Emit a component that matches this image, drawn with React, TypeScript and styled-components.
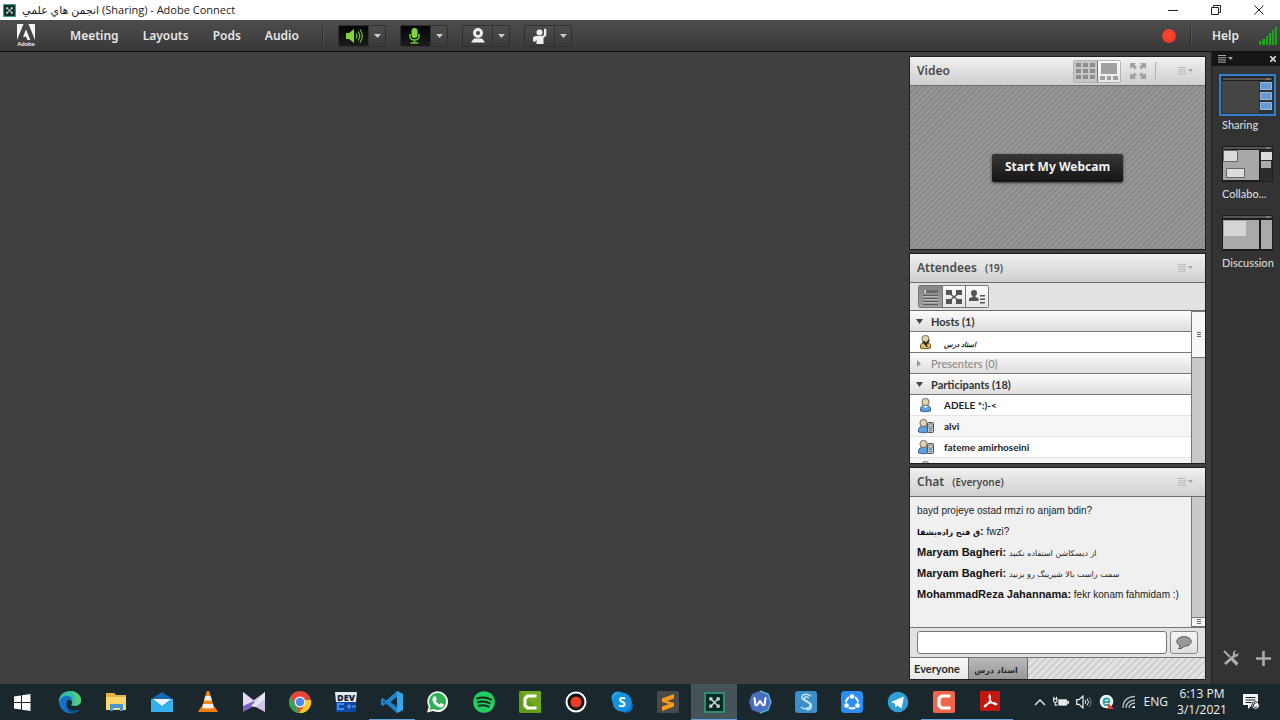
import React, { useState } from "react";
import styled, { createGlobalStyle, css } from "styled-components";

const GlobalStyle = createGlobalStyle`
  *, *::before, *::after { box-sizing: border-box; }
  html, body, #root { height: 100%; }
  body {
    margin: 0;
    background: #404040;
    font-family: "Noto Sans", "DejaVu Sans", sans-serif;
    font-size: 12px;
    overflow: hidden;
  }
  button, input { font: inherit; margin: 0; }
  button { border: 0; padding: 0; background: none; color: inherit; cursor: pointer; }
  ul { list-style: none; margin: 0; padding: 0; }
  h2, p { margin: 0; }
  svg { display: block; flex: none; }
`;

const narrowSans = `Lato, "DejaVu Sans", sans-serif`;

/* ---------- window frame ---------- */

const Window = styled.div`
  display: flex;
  flex-direction: column;
  height: 100vh;
`;

const TitleBar = styled.header`
  display: flex;
  align-items: center;
  flex: none;
  height: 20px;
  padding-left: 3px;
  gap: 6px;
  background: #fff;
  color: #222;
  font-family: "Open Sans", "DejaVu Sans", sans-serif;
  font-size: 11px;
  line-height: 20px;
`;

const WindowControls = styled.div`
  display: flex;
  margin-left: auto;
`;

const WindowButton = styled.button`
  display: flex;
  justify-content: center;
  align-items: center;
  width: 43px;
  height: 18px;
`;

const MenuBar = styled.nav`
  display: flex;
  align-items: center;
  flex: none;
  height: 32px;
  padding-left: 17px;
  background: linear-gradient(#4d4d4d, #383838);
  border-bottom: 1px solid #111;
  color: #e6e6e6;
`;

const MenuItems = styled.div`
  display: flex;
  gap: 24px;
  margin-left: 35px;
  width: 252px;
`;

const MenuButton = styled.button`
  font-size: 12px;
  font-weight: 600;
  line-height: 20px;
`;

const Divider = styled.span<{ $light?: boolean }>`
  width: 2px;
  height: 18px;
  background: ${(p) => (p.$light ? "#b4b4b4" : "#2c2c2c")};
  border-right: 1px solid ${(p) => (p.$light ? "#dcdcdc" : "#555")};
`;

const DeviceTools = styled.div`
  display: flex;
  gap: 14px;
  margin-left: 14px;
`;

const DeviceGroup = styled.div`
  display: flex;
  height: 22px;
  border: 1px solid #2e2e2e;
  border-radius: 2px;
  background: linear-gradient(#4c4c4c, #3b3b3b);
`;

const DeviceButton = styled.button<{ $on?: boolean }>`
  display: flex;
  align-items: center;
  justify-content: center;
  width: 30px;
  background: ${(p) => (p.$on ? "linear-gradient(#050505, #1c1c1c)" : "none")};
  border-right: 1px solid #303030;
`;

const CaretButton = styled.button`
  display: flex;
  align-items: center;
  justify-content: center;
  width: 16px;
`;

const MenuRight = styled.div`
  display: flex;
  align-items: center;
  margin-left: auto;
  padding-right: 2px;
`;

const RecordLight = styled.span`
  width: 14px;
  height: 14px;
  margin-right: 14px;
  border-radius: 50%;
  background: radial-gradient(circle at 45% 40%, #ff4a32, #e8301c);
`;

const HelpButton = styled(MenuButton)`
  margin: 0 20px;
`;

/* ---------- main area ---------- */

const Main = styled.main`
  display: flex;
  flex: 1;
  min-height: 0;
`;

const Stage = styled.section`
  flex: 1;
  min-width: 0;
  background: #404040;
`;

const PodColumn = styled.div`
  display: flex;
  flex-direction: column;
  gap: 3px;
  flex: none;
  width: 302px;
  padding: 4px 5px 4px 0;
`;

const Pod = styled.section<{ $share: number }>`
  display: flex;
  flex-direction: column;
  flex: ${(p) => p.$share} 1 0;
  min-height: 0;
  overflow: hidden;
  border: 1px solid #1e1e1e;
  background: #e2e2e2;
`;

const PodHeader = styled.header`
  display: flex;
  align-items: center;
  flex: none;
  height: 29px;
  padding: 0 12px 0 7px;
  background: linear-gradient(#f0f0f0, #cfcfcf);
  border-bottom: 1px solid #6e6e6e;
  color: #4a4a4a;
`;

const PodTitle = styled.h2`
  font-size: 12px;
  font-weight: 600;
  line-height: 20px;
`;

const PodNote = styled.span`
  margin-left: 8px;
  font-size: 10px;
  font-weight: 600;
`;

const PodTools = styled.div`
  display: flex;
  align-items: center;
  margin-left: auto;
`;

const Segmented = styled.div<{ $dark?: boolean }>`
  display: flex;
  height: 23px;
  border: 1px solid ${(p) => (p.$dark ? "#777" : "#b4b4b4")};
  border-radius: 2px;
  overflow: hidden;
`;

const Segment = styled.button<{ $active?: boolean; $dark?: boolean }>`
  display: flex;
  align-items: center;
  justify-content: center;
  width: 23px;
  background: ${(p) =>
    p.$active ? (p.$dark ? "linear-gradient(#868686, #a0a0a0)" : "#c6c6c6") : "linear-gradient(#fbfbfb, #e6e6e6)"};
  & + & { border-left: 1px solid ${(p) => (p.$dark ? "#777" : "#ccc")}; }
`;

const IconButton = styled.button`
  display: flex;
  align-items: center;
  justify-content: center;
`;

const FullScreenButton = styled(IconButton)`
  margin: 0 9px;
`;

const PodMenuButton = styled(IconButton)`
  margin-left: 21px;
`;

const VideoBody = styled.div`
  display: flex;
  align-items: center;
  justify-content: center;
  flex: 1;
  background: repeating-linear-gradient(135deg, #8a8a8a 0 2px, #969696 2px 4px);
`;

const WebcamButton = styled.button`
  height: 28px;
  padding: 0 13px 2px;
  border-radius: 2px;
  background: linear-gradient(#363636, #141414);
  box-shadow: 0 1px 3px #333;
  color: #f2f2f2;
  font-size: 12px;
  font-weight: 700;
`;

const AttendeeToolbar = styled.div`
  display: flex;
  align-items: center;
  flex: none;
  height: 28px;
  padding-left: 8px;
  background: #e2e2e2;
  border-bottom: 1px solid #6e6e6e;
`;

const ScrollArea = styled.div`
  display: flex;
  flex: 1;
  min-height: 0;
`;

const Scrollable = styled.div`
  flex: 1;
  min-width: 0;
  overflow: hidden;
`;

const ScrollTrack = styled.div<{ $end?: boolean }>`
  display: flex;
  flex-direction: column;
  justify-content: ${(p) => (p.$end ? "flex-end" : "flex-start")};
  flex: none;
  width: 14px;
  background: #c8c8c8;
  border-left: 1px solid #777;
`;

const ScrollThumb = styled.div<{ $long?: boolean }>`
  display: flex;
  align-items: center;
  justify-content: center;
  height: ${(p) => (p.$long ? 47 : 10)}px;
  background: #f7f7f7;
  border: solid #777;
  border-width: 1px 0;
`;

const GroupButton = styled.button<{ $empty?: boolean }>`
  display: flex;
  align-items: center;
  gap: 8px;
  width: 100%;
  height: 21px;
  padding: 0 6px;
  background: linear-gradient(#fcfcfc, #dedede);
  border-bottom: 1px solid #777;
  color: ${(p) => (p.$empty ? "#8a8a8a" : "#333")};
  font-family: ${narrowSans};
  font-size: 11px;
  font-weight: ${(p) => (p.$empty ? 500 : 700)};
`;

const AttendeeRow = styled.li`
  display: flex;
  align-items: center;
  gap: 7px;
  height: 21px;
  padding-left: 7px;
  background: #fff;
  border-bottom: 1px solid #e3e3e3;
  color: #222;
  font-family: ${narrowSans};
  font-size: 10px;
  font-weight: 700;
  &:nth-child(even) { background: #f6f6f6; }
`;

const HostList = styled.ul`
  ${AttendeeRow} { border-color: #777; }
`;

const HostName = styled.span`
  padding-top: 4px;
  font-size: 7px;
  font-style: italic;
`;

const Messages = styled.ul`
  padding: 3px 7px;
  color: #222;
  font-family: "Liberation Sans", "DejaVu Sans", sans-serif;
  font-size: 10px;
`;

const ChatBody = styled(ScrollArea)`
  background: #f0f0f0;
  border-bottom: 1px solid #777;
`;

const Message = styled.li`
  height: 21px;
  line-height: 21px;
  white-space: nowrap;
`;

const Persian = styled.span`
  font-family: "DejaVu Sans", sans-serif;
  font-size: 8px;
`;

const Sender = styled.b`
  color: #111;
  font-size: 11px;
`;

const Composer = styled.form`
  display: flex;
  align-items: center;
  gap: 3px;
  flex: none;
  height: 29px;
  padding: 0 7px;
`;

const ChatInput = styled.input`
  flex: 1;
  min-width: 0;
  height: 23px;
  padding: 0 4px;
  border: 1px solid #777;
  border-radius: 3px;
  background: #fff;
`;

const SendButton = styled.button`
  display: flex;
  align-items: center;
  justify-content: center;
  width: 28px;
  height: 23px;
  border: 1px solid #8a8a8a;
  border-radius: 3px;
  background: linear-gradient(#f6f6f6, #dedede);
`;

const ChatTabs = styled.div`
  display: flex;
  flex: none;
  height: 22px;
  border-top: 1px solid #777;
  background: repeating-linear-gradient(135deg, #cfcfcf 0 2px, #e2e2e2 2px 5px);
`;

const ChatTab = styled.button<{ $active?: boolean }>`
  width: 59px;
  padding-right: 4px;
  border-right: 1px solid #666;
  color: #2a2a2a;
  font-family: ${narrowSans};
  font-size: 11px;
  font-weight: 700;
  background: ${(p) => (p.$active ? "linear-gradient(#fafafa, #e6e6e6)" : "linear-gradient(#b8b8b8, #989898)")};
`;

/* ---------- layouts sidebar ---------- */

const Sidebar = styled.aside`
  display: flex;
  flex-direction: column;
  flex: none;
  width: 69px;
  background: #333;
  border-left: 1px solid #1f1f1f;
  color: #d8d8d8;
`;

const SidebarHeader = styled.div`
  display: flex;
  align-items: center;
  justify-content: space-between;
  height: 14px;
  padding: 0 4px 0 6px;
  background: #161616;
`;

const LayoutList = styled.ul`
  display: flex;
  flex-direction: column;
  gap: 10px;
  padding: 8px 4px 0 7px;
`;

const LayoutButton = styled.button`
  display: flex;
  flex-direction: column;
  gap: 1px;
  font-family: ${narrowSans};
  font-size: 11px;
  font-weight: 500;
  line-height: 16px;
  text-align: left;
`;

const Preview = styled.span<{ $selected?: boolean }>`
  display: block;
  padding: 1px;
  border: 2px solid ${(p) => (p.$selected ? "#2f7fd0" : "transparent")};
`;

const LayoutLabel = styled.span`
  padding-left: 3px;
  white-space: nowrap;
`;

const SidebarTools = styled.div`
  display: flex;
  justify-content: space-between;
  margin-top: auto;
  padding: 0 9px 18px 11px;
`;

/* ---------- taskbar ---------- */

const Taskbar = styled.footer`
  display: flex;
  flex: none;
  height: 36px;
  background: #1a282d;
  color: #f0f0f0;
`;

const TaskButton = styled.button<{ $state?: "running" | "focused" }>`
  display: flex;
  align-items: center;
  justify-content: center;
  width: 46px;
  flex: 0 1 46px;
  ${(p) => p.$state === "focused" && css`background: #46545a;`}
  ${(p) => p.$state && css`box-shadow: inset 0 -1px #5fa3dc;`}
`;

const StartButton = styled(TaskButton)`
  flex-basis: 47px;
  padding-right: 3px;
`;

const Tray = styled.div`
  display: flex;
  align-items: center;
  gap: 7px;
  margin-left: auto;
  padding-right: 20px;
  font-family: "Open Sans", sans-serif;
  font-size: 12px;
  line-height: 16px;
`;

const Clock = styled.time`
  width: 50px;
  margin: 0 9px 0 2px;
  text-align: center;
  white-space: nowrap;
`;

/* ---------- icons ---------- */

const ConnectIcon = ({ size }: { size: number }) => (
  <svg width={size} height={size} viewBox="0 0 20 20">
    <rect x="1" y="1" width="18" height="18" fill="#082b25" stroke="#2f9c7b" strokeWidth="1.6" />
    <g fill="#c8d8d2">
      <path d="M5 5h3v3H5zM12 5h3v3h-3zM5 12h3v3H5zM12 12h3v3h-3z" />
      <path d="M6 7l1-1 7 7-1 1zM13 6l1 1-7 7-1-1z" />
    </g>
  </svg>
);

const AdobeLogo = () => (
  <svg width="18" height="24" viewBox="0 0 18 24">
    <path fill="#f4f4f4" d="M0 0h6.5L0 16zM11.500 0H18v16zM9 5.500l4.400 10.500h-3l-1.300-3.300H6z" />
    <text x="9" y="22" textAnchor="middle" fill="#f4f4f4" fontSize="6" fontWeight="700" fontFamily="Lato">Adobe</text>
  </svg>
);

const Caret = ({ color = "#ccc" }: { color?: string }) => (
  <svg width="7" height="4" viewBox="0 0 7 4"><path d="M0 0h7L3.500 4z" fill={color} /></svg>
);

const SpeakerIcon = () => (
  <svg width="18" height="16" viewBox="0 0 18 16">
    <path d="M1 5h3l5-4v14l-5-4H1z" fill="#7fd53a" />
    <path d="M11 5.500q2 2.500 0 5M13 3.500q3.500 4.500 0 9M15 1.500q4.500 6.500 0 13" fill="none" stroke="#6cc030" strokeWidth="1.200" />
  </svg>
);

const MicIcon = () => (
  <svg width="14" height="16" viewBox="0 0 14 16">
    <rect x="2.500" y="0" width="6" height="10" rx="3" fill="#7fd53a" />
    <path d="M1 6v2q0 4 4.500 4T10 8V6M5.500 12v3M1.500 15h8" fill="none" stroke="#6cc030" strokeWidth="1.600" />
  </svg>
);

const WebcamIcon = () => (
  <svg width="14" height="15" viewBox="0 0 14 15">
    <circle cx="7" cy="5" r="3.500" fill="none" stroke="#efefef" strokeWidth="3" />
    <path d="M3 10.500h8l3 4H0z" fill="#efefef" />
  </svg>
);

const RaiseHandIcon = () => (
  <svg width="15" height="16" viewBox="0 0 15 16">
    <circle cx="7.500" cy="4.500" r="3" fill="#efefef" />
    <path d="M1 9.500Q2 8 4 8h6.500l1.500-1.500V2q0-1.500 1.200-1.500T14.300 2v5.500L11.500 10v6h-7v-4.500L3 14 1 13z" fill="#efefef" />
  </svg>
);

const SignalIcon = () => (
  <svg width="19" height="18" viewBox="0 0 19 18">
    <path d="M0 14h2v4H0zM3 12h3v6H3zM7 9h2v9H7zM10 6h2v12h-2zM13 3h2v15h-2zM16 0h2v18h-2z" fill="#18a818" />
  </svg>
);

const PodMenuIcon = ({ color = "#aaa", lineColor = color }: { color?: string; lineColor?: string }) => (
  <svg width="15" height="8" viewBox="0 0 15 8">
    <path d="M0 .5h8M0 2.700h8M0 4.900h8M0 7.100h8" stroke={lineColor} />
    <path d="M10 2h5l-2.500 3z" fill={color} />
  </svg>
);

const GridIcon = () => (
  <svg width="19" height="16" viewBox="0 0 19 16">
    <path d="M0 0h5v4H0zM7 0h5v4H7zM14 0h5v4h-5zM0 6h5v4H0zM7 6h5v4H7zM14 6h5v4h-5zM0 12h5v4H0zM7 12h5v4H7zM14 12h5v4h-5z" fill="#8d8d8d" />
  </svg>
);

const FilmstripIcon = () => (
  <svg width="18" height="17" viewBox="0 0 18 17">
    <path d="M1 0h16v11H1zM0 13h5v4H0zM7 13h4v4H7zM13 13h5v4h-5z" fill="#a0a0a0" />
  </svg>
);

const FullScreenIcon = () => (
  <svg width="16" height="16" viewBox="0 0 16 16">
    <path d="M0 0h6L4.300 1.700l2.500 2.500-2.300 2.300L2 4 0 6zM16 0v6l-2-2-2.500 2.500-2.300-2.300 2.500-2.500L10 0zM0 16v-6l2 2 2.500-2.500 2.300 2.300-2.500 2.500L6 16zM16 16h-6l1.700-1.700-2.500-2.500 2.300-2.300L14 12l2-2z" fill="#a0a0a0" />
  </svg>
);

const ListIcon = () => (
  <svg width="17" height="16" viewBox="0 0 17 16">
    <path d="M1 1h15v3H1z" fill="#6a6a6a" />
    <path d="M2 1h2v3H2z" fill="#ccc" />
    <path d="M1 6.500h15M1 9.500h15M1 12.500h15M1 15.500h15" stroke="#5b5b5b" />
    <path d="M1 7.500h15M1 10.500h15M1 13.500h15" stroke="#bbb" />
  </svg>
);

const BreakoutIcon = () => (
  <svg width="16" height="14" viewBox="0 0 16 14">
    <path d="M0 0h6v5H0zM10 0h6v5h-6zM0 9h6v5H0zM10 9h6v5h-6z" fill="#555" />
    <path d="M3 3l10 8M13 3L3 11" stroke="#555" strokeWidth="1.600" />
  </svg>
);

const StatusIcon = () => (
  <svg width="16" height="14" viewBox="0 0 16 14">
    <circle cx="5" cy="3" r="3" fill="#555" />
    <path d="M3.500 5h3v2l3 1.200V11H0V8.200L3.500 7zM11 5h5v1.500h-5zM11 8.500h5V10h-5zM11 12h5v1.500h-5z" fill="#555" />
  </svg>
);

const GroupArrow = ({ open }: { open: boolean }) => (
  <svg width="7" height="7" viewBox="0 0 7 7">
    <path d={open ? "M0 1h7L3.500 6z" : "M1 0v7l4-3.500z"} fill={open ? "#444" : "#999"} />
  </svg>
);

const PersonIcon = ({ kind }: { kind: "host" | "user" | "mobile" }) => {
  const body = kind === "host" ? "#e2bb63" : "#5f9fde";
  const edge = kind === "host" ? "#66501c" : "#38638f";
  const x = kind === "mobile" ? 0 : 2;
  return (
    <svg width="20" height="16" viewBox="-1 0 20 16">
      <g transform={`translate(${x} 0)`}>
        <path d="M.5 14q-.5-5 3-5.500h4q3.500.5 3 5.500-5.500 1.500-10 0z" fill={body} stroke={edge} />
        <circle cx="5.500" cy="5" r="3.600" fill="#dfd3b5" stroke="#776d58" />
        {kind === "host" && <path d="M3 8l3 3 3-5M4 7l3 6" stroke="#332a16" strokeWidth="1.600" fill="none" />}
        {kind === "user" && <path d="M3 9l2.500 2L8 9z" fill="#fff" />}
      </g>
      {kind === "mobile" && (
        <g>
          <rect x="9.500" y="4.500" width="6" height="10" rx="1" fill="#b9c0c6" stroke="#555" />
          <path d="M11 6h3v3h-3zM11 10.500h3M11 12.500h3" stroke="#6c7379" fill="#e8ecee" strokeWidth=".8" />
        </g>
      )}
    </svg>
  );
};

const Grip = () => (
  <svg width="4" height="6" viewBox="0 0 4 6"><path d="M0 .5h4M0 2.500h4M0 4.500h4" stroke="#666" /></svg>
);

const BubbleIcon = () => (
  <svg width="16" height="14" viewBox="0 0 16 14">
    <path d="M8 .7c4 0 7.200 2 7.200 4.800S12 10.300 8 10.300q-2 2.700-5.500 2.500Q4 11.500 4 9.500C2 8.600.8 7.200.8 5.500.8 2.700 4 .7 8 .7z" fill="#999" stroke="#555" />
  </svg>
);

const LayoutDrawing = ({ kind }: { kind: "sharing" | "collaboration" | "discussion" }) => (
  <svg width="51" height="36" viewBox="0 0 51 36">
    <rect width="51" height="36" fill="#1c1c1c" />
    <path d="M1 2h49" stroke="#555" strokeWidth="2" />
    <path d="M44 2h4" stroke="#b5a27a" />
    {kind === "sharing" && (
      <>
        <rect x="0" y="4" width="38" height="32" fill="#454545" />
        <rect x="37" y="4" width="14" height="32" fill="#303030" />
        <path d="M38.500 5.500h11v7h-11zM38.500 15.500h11v7h-11zM38.500 25.500h11v7h-11z" fill="#6699d0" stroke="#93bce8" />
      </>
    )}
    {kind === "collaboration" && (
      <>
        <rect x="1" y="4" width="36" height="30" fill="#a8a8a8" />
        <rect x="38" y="4" width="12" height="31" fill="#2c2c2c" />
        <path d="M1.500 4.500h14v11h-14zM4.500 22.500h18v9h-18z" fill="#dcdcdc" stroke="#666" />
        <path d="M39 6h11v8H39z" fill="#dcdcdc" />
        <path d="M39 15h10v7H39z" fill="#aaa" />
      </>
    )}
    {kind === "discussion" && (
      <>
        <rect x="1" y="5" width="36" height="29" fill="#aaa" />
        <rect x="2" y="6" width="22" height="15" fill="#d5d5d5" />
        <rect x="39" y="5" width="11" height="29" fill="#aaa" />
      </>
    )}
  </svg>
);

const TaskIcon = ({ children }: { children: React.ReactNode }) => (
  <svg width="24" height="24" viewBox="0 0 24 24">{children}</svg>
);

const apps: { name: string; state?: "running" | "focused"; art: React.ReactNode }[] = [
  {
    name: "Edge",
    art: (
      <>
        <path d="M1 13C0 6 5 1 12 1s12 5 11 11c-1 4-7 5-10 3 2-2 1-6-3-6s-6 3-9 4z" fill="#35bfa9" />
        <path d="M1 13C2 4 13 4 15 10c-4-3-9 2-5 8 3 4 8 4 12 1-3 4-8 5-12 4C5 22 2 18 1 13z" fill="#1473c4" />
        <path d="M9 11c-3 7 4 12 12 8-6 8-16 2-12-8z" fill="#0c4f99" />
        <path d="M13 1c7 0 11 6 10 11-1 3-5 4-8 3 4-3 3-9-2-14z" fill="#62cf6a" opacity=".75" />
      </>
    ),
  },
  {
    name: "File Explorer",
    art: (
      <>
        <path d="M2 3h8l2 2h10v15H2z" fill="#e8b33c" />
        <path d="M2 7h20v13H2z" fill="#fbd76b" />
        <path d="M6 21v-7h13v7h-3v-3H9v3z" fill="#4796cf" />
      </>
    ),
  },
  {
    name: "Mail",
    art: (
      <>
        <path d="M1 9l11-7 11 7v4H1z" fill="#1467b0" />
        <path d="M1 9h22v13H1z" fill="#2aa5e8" />
        <path d="M1 9l11 8 11-8v13H1z" fill="#37b0ee" opacity=".85" />
        <path d="M3 9h18l-9 7z" fill="#eef6fb" />
      </>
    ),
  },
  {
    name: "VLC",
    art: (
      <>
        <path d="M5 17h14l3 5H2z" fill="#ef7d12" />
        <path d="M10.800 1h2.400l5 17q-6 3-12.400 0z" fill="#f58a1c" />
        <path d="M9.300 6h5.400l1.200 4.500H8.100zM7 14h10l1 3.500q-6 2-12 0z" fill="#efefef" />
      </>
    ),
  },
  {
    name: "KMPlayer",
    art: (
      <>
        <path d="M1 2l11 8v6L1 22z" fill="#7a63c4" />
        <path d="M23 2L12 10v6l11 6z" fill="#cfc5e8" />
        <path d="M1 2l11 9L1 16z" fill="#e4dcf6" />
        <path d="M23 2L9 16l4 1 10-8z" fill="#e9e4f4" />
      </>
    ),
  },
  {
    name: "Chrome",
    art: (
      <>
        <circle cx="12" cy="12" r="11" fill="#e5473a" />
        <path d="M2.500 6.500L9 17l2 6A11 11 0 0 1 2.500 6.500z" fill="#31a24f" />
        <path d="M23 10H13l3 6-5 7A11 11 0 0 0 22.500 8z" fill="#fbc828" />
        <circle cx="12" cy="12" r="5.500" fill="#f2f2f2" />
        <circle cx="12" cy="12" r="4.200" fill="#4a8af0" />
      </>
    ),
  },
  {
    name: "Dev-C++",
    art: (
      <>
        <path d="M2 2h20v20H2z" fill="#1247a0" />
        <path d="M1 2h22l-1 10H2z" fill="#e5e9f2" />
        <text x="12" y="11" textAnchor="middle" fontSize="9" fontWeight="800" fontFamily="Open Sans" fill="#16223f">DEV</text>
        <path d="M10 14H4v5h6M13 16.500h4M15 14.500v4M18 16.500h4" stroke="#3f8cf0" strokeWidth="2" fill="none" />
      </>
    ),
  },
  {
    name: "Visual Studio Code",
    state: "running",
    art: (
      <>
        <path d="M17 1l6 3v16l-6 3L6 13.500 3 16l-2-1.200V9.200L3 8l3 2.500z" fill="#1c83cd" />
        <path d="M17 7v10l-6.500-5z" fill="#1a282d" />
        <path d="M3.500 10.500v3L5 12z" fill="#1a282d" />
        <path d="M17 1l6 3v16l-6 3z" fill="#37a5ec" />
      </>
    ),
  },
  {
    name: "WhatsApp",
    art: (
      <>
        <path d="M1 22.500l1.600-5.700A10.400 10.400 0 1 1 7 21z" fill="#f3f3f3" />
        <path d="M3.500 20l1-3.700A8.500 8.500 0 1 1 7.500 19z" fill="#2fb255" />
        <path d="M8 6.500l1.500-.3 1.300 3-1.200 1.500q1.400 2.600 3.900 3.700l1.400-1.500 2.900 1.500c-.2 3-3 3.300-5.300 2.300-3.300-1.300-6-4.700-6-7.300 0-1.300.6-2.200 1.500-2.900z" fill="#fff" />
      </>
    ),
  },
  {
    name: "Spotify",
    art: (
      <>
        <circle cx="12" cy="12" r="10.800" fill="#1fcf60" />
        <path d="M5 8.500q8-2.500 14 1.200M6 12.300q6.500-2 11.700 1M6.800 15.800q5.500-1.500 9.700.9" stroke="#14281c" strokeWidth="2" fill="none" strokeLinecap="round" />
      </>
    ),
  },
  {
    name: "Camtasia",
    art: (
      <>
        <rect x="1" y="1" width="22" height="22" rx="1.500" fill="#5f9c10" />
        <path d="M1 1h22v22z" fill="#7fb62a" opacity=".6" />
        <path d="M18.500 6H9.500L7 8.500v7L9.500 18h9" fill="none" stroke="#fff" strokeWidth="3.200" />
      </>
    ),
  },
  {
    name: "Recorder",
    art: (
      <>
        <circle cx="12" cy="12" r="9.500" fill="#141414" stroke="#fff" strokeWidth="2" />
        <circle cx="12" cy="12" r="5.500" fill="#ee3a20" />
      </>
    ),
  },
  {
    name: "Skype",
    art: (
      <>
        <circle cx="8" cy="8" r="6.500" fill="#20a9ec" />
        <circle cx="16" cy="16" r="6.800" fill="#0b78cf" />
        <circle cx="12" cy="12" r="9.600" fill="#1292df" />
        <text x="12" y="17" textAnchor="middle" fontSize="14" fontWeight="700" fontFamily="Open Sans" fill="#fff">S</text>
      </>
    ),
  },
  {
    name: "Sublime Text",
    art: (
      <>
        <rect x="1" y="1" width="22" height="22" rx="1.500" fill="#4a4a4a" />
        <path d="M6 8.500l12-4.500v4.500L11 11l7 2v3.500L6 21v-4.500l7-2.500-7-2z" fill="#ff9a12" />
      </>
    ),
  },
  { name: "Adobe Connect", state: "focused", art: null },
  {
    name: "Word helper",
    art: (
      <>
        <path d="M12 1l8 3 3 8-3 8-8 3-8-3-3-8 3-8z" fill="#4a6fc0" />
        <path d="M12 1l8 3 3 8-3 8-8 3" fill="none" stroke="#5cb2e0" strokeWidth="1.400" />
        <path d="M6.500 8l.8 6q.4 2 2 1l2.700-4 2.700 4q1.600 1 2-1l.8-6" fill="none" stroke="#fff" strokeWidth="2" strokeLinecap="round" strokeLinejoin="round" />
      </>
    ),
  },
  {
    name: "Sketch tool",
    art: (
      <>
        <rect x="1" y="1" width="22" height="22" rx="3" fill="#3b8fc9" />
        <path d="M17 6q-4-3-8-1-3 3 1 5l5 3q3 3-1 5-4 2-7-1M15 8q-3-2-5 0 0 2 3 3l4 3q2 5-4 6" fill="none" stroke="#bfe3f3" strokeWidth="1.500" />
      </>
    ),
  },
  {
    name: "SHAREit",
    art: (
      <>
        <rect x="1" y="1" width="22" height="22" rx="4" fill="#2c8df5" />
        <circle cx="12" cy="12.500" r="6" fill="none" stroke="#fff" strokeWidth="1.800" />
        <g fill="#fff" stroke="#2c8df5">
          <circle cx="12" cy="6.500" r="2.800" />
          <circle cx="6.500" cy="15.500" r="2.800" />
          <circle cx="17.500" cy="15.500" r="2.800" />
        </g>
      </>
    ),
  },
  {
    name: "Telegram",
    art: (
      <>
        <circle cx="12" cy="12" r="10.300" fill="#2f9fd8" />
        <path d="M5 12l13-5.500-2.500 12-4-3-2 2-.7-4z" fill="#fff" />
      </>
    ),
  },
  {
    name: "Camtasia Recorder",
    state: "running",
    art: (
      <>
        <rect x="1" y="1" width="22" height="22" rx="2" fill="#f0654b" />
        <path d="M18.500 6H9.500L7 8.500v7L9.500 18h9" fill="none" stroke="#fff" strokeWidth="3.200" />
      </>
    ),
  },
  {
    name: "Acrobat Reader",
    state: "running",
    art: (
      <>
        <rect x="2" y="1" width="20" height="20" rx="1" fill="#c3160c" />
        <path d="M11.500 5q-1 2 .5 5t5 4.500q2 .5 1.500-.7-2-1.600-6-1-4 1-6 3-.5 1.500 1 .7 2-1.500 4-5.500 1.500-4 0-6z" fill="none" stroke="#fff" strokeWidth="1.400" />
      </>
    ),
  },
];

const WindowsIcon = () => (
  <svg width="17" height="17" viewBox="0 0 17 17">
    <path d="M0 2.500l7-1v6.500H0zM8 1.300L16.500 0v8H8zM0 9h7v6.500l-7-1zM8 9h8.500v8L8 15.700z" fill="#fff" />
  </svg>
);

/* ---------- data ---------- */

const participants: { name: string; kind: "user" | "mobile" }[] = [
  { name: "ADELE *:)-<", kind: "user" },
  { name: "alvi", kind: "mobile" },
  { name: "fateme amirhoseini", kind: "mobile" },
  { name: "", kind: "user" },
];

const layouts = [
  { kind: "sharing", label: "Sharing" },
  { kind: "collaboration", label: "Collabo..." },
  { kind: "discussion", label: "Discussion" },
] as const;

const devices = [
  { label: "Speaker", on: true, icon: <SpeakerIcon /> },
  { label: "Microphone", on: true, icon: <MicIcon /> },
  { label: "Webcam", on: false, icon: <WebcamIcon /> },
  { label: "Raise hand", on: false, icon: <RaiseHandIcon /> },
];

const PodMenu = () => (
  <PodMenuButton aria-label="Pod options"><PodMenuIcon color="#a4a4a4" lineColor="#b8b8b8" /></PodMenuButton>
);

export default function App() {
  const [layout, setLayout] = useState<string>("sharing");
  const [draft, setDraft] = useState("");

  return (
    <Window>
      <GlobalStyle />
      <TitleBar>
        <ConnectIcon size={13} />
        <span>انجمن هاي علمي (Sharing) - Adobe Connect</span>
        <WindowControls>
          <WindowButton aria-label="Minimize">
            <svg width="10" height="10" viewBox="0 0 10 10"><path d="M0 5.500h10" stroke="#222" /></svg>
          </WindowButton>
          <WindowButton aria-label="Restore">
            <svg width="10" height="10" viewBox="0 0 10 10"><path d="M.5 2.500h7v7h-7zM2.500 2.500v-2h7v7h-2" fill="none" stroke="#222" /></svg>
          </WindowButton>
          <WindowButton aria-label="Close">
            <svg width="10" height="10" viewBox="0 0 10 10"><path d="M.5.5l9 9M9.500.5l-9 9" stroke="#222" /></svg>
          </WindowButton>
        </WindowControls>
      </TitleBar>

      <MenuBar>
        <AdobeLogo />
        <MenuItems>
          {["Meeting", "Layouts", "Pods", "Audio"].map((m) => <MenuButton key={m}>{m}</MenuButton>)}
        </MenuItems>
        <Divider />
        <DeviceTools>
          {devices.map((d) => (
            <DeviceGroup key={d.label}>
              <DeviceButton $on={d.on} aria-label={d.label}>{d.icon}</DeviceButton>
              <CaretButton aria-label={`${d.label} options`}><Caret /></CaretButton>
            </DeviceGroup>
          ))}
        </DeviceTools>
        <MenuRight>
          <RecordLight />
          <Divider />
          <HelpButton>Help</HelpButton>
          <SignalIcon />
        </MenuRight>
      </MenuBar>

      <Main>
        <Stage aria-label="Stage" />
        <PodColumn>
          <Pod $share={194}>
            <PodHeader>
              <PodTitle>Video</PodTitle>
              <PodTools>
                <Segmented>
                  <Segment $active aria-label="Grid view"><GridIcon /></Segment>
                  <Segment aria-label="Filmstrip view"><FilmstripIcon /></Segment>
                </Segmented>
                <FullScreenButton aria-label="Full screen"><FullScreenIcon /></FullScreenButton>
                <Divider $light />
                <PodMenu />
              </PodTools>
            </PodHeader>
            <VideoBody>
              <WebcamButton>Start My Webcam</WebcamButton>
            </VideoBody>
          </Pod>

          <Pod $share={211}>
            <PodHeader>
              <PodTitle>Attendees</PodTitle>
              <PodNote>(19)</PodNote>
              <PodTools><PodMenu /></PodTools>
            </PodHeader>
            <AttendeeToolbar>
              <Segmented $dark>
                <Segment $dark $active aria-label="List view"><ListIcon /></Segment>
                <Segment $dark aria-label="Breakout rooms"><BreakoutIcon /></Segment>
                <Segment $dark aria-label="Status view"><StatusIcon /></Segment>
              </Segmented>
            </AttendeeToolbar>
            <ScrollArea>
              <Scrollable>
                <GroupButton><GroupArrow open />Hosts (1)</GroupButton>
                <HostList>
                  <AttendeeRow><PersonIcon kind="host" /><HostName>استاد درس</HostName></AttendeeRow>
                </HostList>
                <GroupButton $empty><GroupArrow open={false} />Presenters (0)</GroupButton>
                <GroupButton><GroupArrow open />Participants (18)</GroupButton>
                <ul>
                  {participants.map((p, i) => (
                    <AttendeeRow key={i}><PersonIcon kind={p.kind} />{p.name}</AttendeeRow>
                  ))}
                </ul>
              </Scrollable>
              <ScrollTrack><ScrollThumb $long><Grip /></ScrollThumb></ScrollTrack>
            </ScrollArea>
          </Pod>

          <Pod $share={213}>
            <PodHeader>
              <PodTitle>Chat</PodTitle>
              <PodNote>(Everyone)</PodNote>
              <PodTools><PodMenu /></PodTools>
            </PodHeader>
            <ChatBody>
              <Scrollable>
                <Messages>
                  <Message>bayd projeye ostad rmzi ro anjam bdin?</Message>
                  <Message><Sender><Persian>ق فتح زاده‌یشقا</Persian>:</Sender> fwzi?</Message>
                  <Message><Sender>Maryam Bagheri:</Sender> <Persian>از دیسکاشن استفاده نکنید</Persian></Message>
                  <Message><Sender>Maryam Bagheri:</Sender> <Persian>سمت راست بالا شیرینگ رو بزنید</Persian></Message>
                  <Message><Sender>MohammadReza Jahannama:</Sender> fekr konam fahmidam :)</Message>
                </Messages>
              </Scrollable>
              <ScrollTrack $end><ScrollThumb><Grip /></ScrollThumb></ScrollTrack>
            </ChatBody>
            <Composer onSubmit={(e) => { e.preventDefault(); setDraft(""); }}>
              <ChatInput aria-label="Message" value={draft} onChange={(e) => setDraft(e.target.value)} />
              <SendButton aria-label="Send message"><BubbleIcon /></SendButton>
            </Composer>
            <ChatTabs>
              <ChatTab $active>Everyone</ChatTab>
              <ChatTab><Persian as="b">استاد درس</Persian></ChatTab>
            </ChatTabs>
          </Pod>
        </PodColumn>

        <Sidebar>
          <SidebarHeader>
            <IconButton aria-label="Layout options"><PodMenuIcon color="#aaa" /></IconButton>
            <IconButton aria-label="Close layouts">
              <svg width="6" height="6" viewBox="0 0 6 6"><path d="M0 0l6 6M6 0L0 6" stroke="#ccc" strokeWidth="1.800" /></svg>
            </IconButton>
          </SidebarHeader>
          <LayoutList>
            {layouts.map((l) => (
              <li key={l.kind}>
                <LayoutButton onClick={() => setLayout(l.kind)}>
                  <Preview $selected={layout === l.kind}><LayoutDrawing kind={l.kind} /></Preview>
                  <LayoutLabel>{l.label}</LayoutLabel>
                </LayoutButton>
              </li>
            ))}
          </LayoutList>
          <SidebarTools>
            <IconButton aria-label="Manage layouts">
              <svg width="16" height="16" viewBox="0 0 16 16">
                <path d="M1 1l6 6M9 9l5 5" stroke="#aaa" strokeWidth="2" />
                <path d="M9 9l5.500 5.500" stroke="#aaa" strokeWidth="3.200" />
                <path d="M1 13L10 5q-1-3 2-4.500h1L11.500 3 13 4.500 15.500 3q.5 4-4 4.200L3 15z" fill="#aaa" />
              </svg>
            </IconButton>
            <IconButton aria-label="Add layout">
              <svg width="15" height="15" viewBox="0 0 15 15"><path d="M7.500 0v15M0 7.500h15" stroke="#aaa" strokeWidth="2.600" /></svg>
            </IconButton>
          </SidebarTools>
        </Sidebar>
      </Main>

      <Taskbar>
        <StartButton aria-label="Start"><WindowsIcon /></StartButton>
        {apps.map((a) => (
          <TaskButton key={a.name} $state={a.state} aria-label={a.name}>
            {a.art ? <TaskIcon>{a.art}</TaskIcon> : <ConnectIcon size={21} />}
          </TaskButton>
        ))}
        <Tray>
          <IconButton aria-label="Show hidden icons">
            <svg width="12" height="8" viewBox="0 0 12 8"><path d="M1 7l5-5 5 5" fill="none" stroke="#eee" strokeWidth="1.400" /></svg>
          </IconButton>
          <svg width="16" height="14" viewBox="0 0 18 14">
            <path d="M6.500 4.500h9v6h-9z" fill="#e8e8e8" stroke="#eee" />
            <path d="M16 6h2v3h-2z" fill="#eee" />
            <path d="M1 1v2M4 1v2M.5 3.500h4v2q-.5 2-2 2t-2-2zM2.500 7v3.500H5" fill="none" stroke="#eee" strokeWidth="1.200" />
          </svg>
          <svg width="16" height="14" viewBox="0 0 16 14">
            <path d="M.7 4.700H3L7 1v12L3 9.300H.7z" fill="none" stroke="#eee" strokeWidth="1.200" />
            <path d="M9 5q1.500 2 0 4M11 3.500q3 3.500 0 7" fill="none" stroke="#eee" />
            <path d="M13 2q4 5 0 10" fill="none" stroke="#7d878b" />
          </svg>
          <svg width="16" height="16" viewBox="0 0 16 16">
            <circle cx="7.500" cy="7.500" r="6.800" fill="#f2f6f6" />
            <path d="M4.500 8h6q0-3.500-3-3.500t-3 3.500 3.500 3H10" fill="none" stroke="#2aa5a8" strokeWidth="1.800" />
            <path d="M9 9l6 6h-6z" fill="#d8432c" />
          </svg>
          <svg width="15" height="14" viewBox="0 0 15 14">
            <path d="M1 13Q1 2 13 1.500M4 13q0-7 9-8M7 13q0-4 6-5" fill="none" stroke="#b8bec0" strokeWidth="1.300" />
            <path d="M10 13q0-2 3-2v2z" fill="#fff" />
          </svg>
          <span>ENG</span>
          <Clock>6:13 PM<br />3/1/2021</Clock>
          <IconButton aria-label="Notifications">
            <svg width="17" height="16" viewBox="0 0 17 16">
              <path d="M0 0h15v11H9l-4 4v-4H0z" fill="#f4f4f4" />
              <path d="M2.500 3.500h10M2.500 6h10M2.500 8.500h6" stroke="#1a282d" />
              <circle cx="12.500" cy="11.500" r="3.800" fill="#f4f4f4" stroke="#1a282d" />
              <path d="M12.500 9.500a2 2 0 1 0 1.500 3" fill="none" stroke="#1a282d" />
            </svg>
          </IconButton>
        </Tray>
      </Taskbar>
    </Window>
  );
}
